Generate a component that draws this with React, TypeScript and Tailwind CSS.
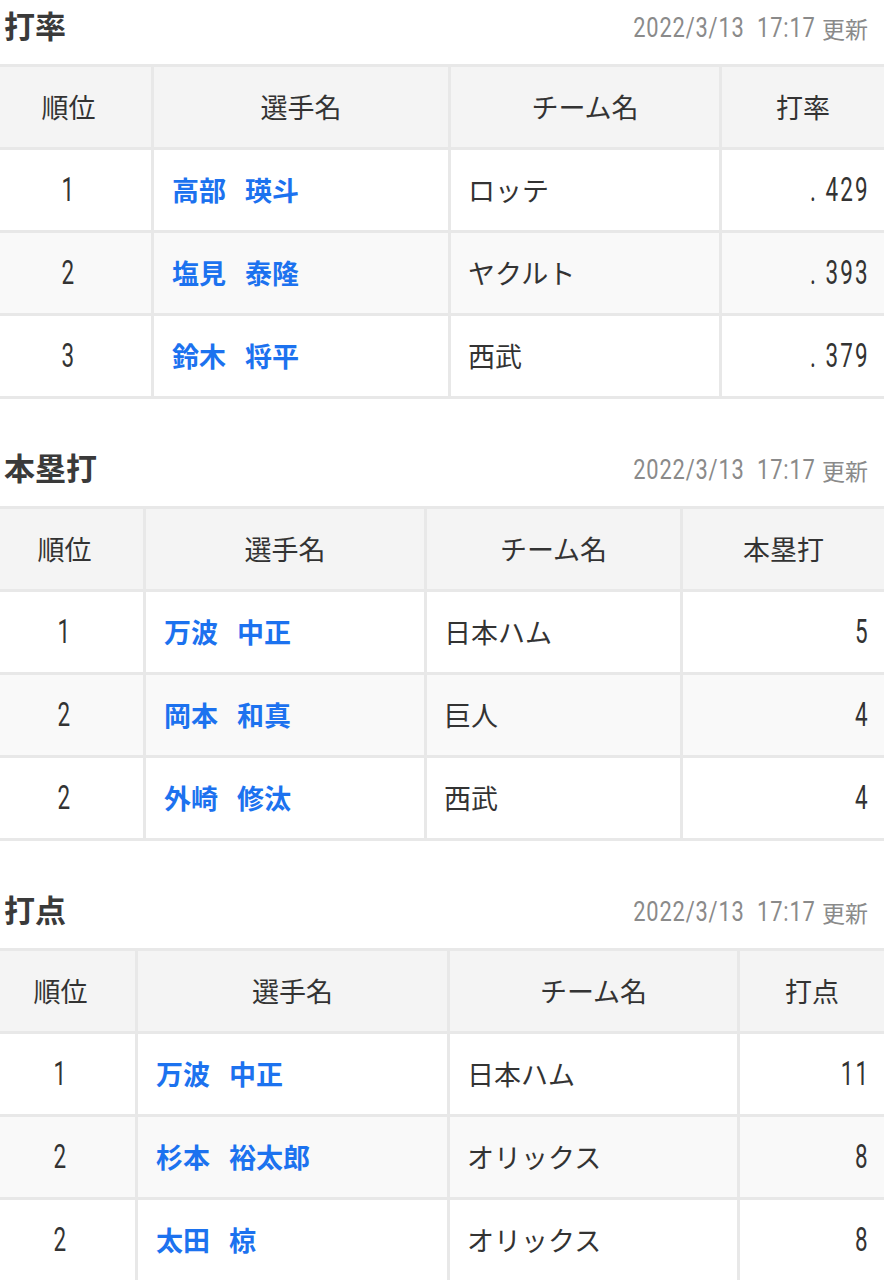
const ja = { fontFamily: '"Noto Sans CJK JP", "Noto Sans", sans-serif' };

type Row = { rank: string; first: string; last: string; team: string; value: string };

type Section = {
  title: string;
  cols: string;
  rows: Row[];
};

const sections: Section[] = [
  {
    title: "打率",
    cols: "grid-cols-[151px_297px_271px_1fr]",
    rows: [
      { rank: "1", first: "高部", last: "瑛斗", team: "ロッテ", value: ". 429" },
      { rank: "2", first: "塩見", last: "泰隆", team: "ヤクルト", value: ". 393" },
      { rank: "3", first: "鈴木", last: "将平", team: "西武", value: ". 379" },
    ],
  },
  {
    title: "本塁打",
    cols: "grid-cols-[143px_281px_256px_1fr]",
    rows: [
      { rank: "1", first: "万波", last: "中正", team: "日本ハム", value: "5" },
      { rank: "2", first: "岡本", last: "和真", team: "巨人", value: "4" },
      { rank: "2", first: "外崎", last: "修汰", team: "西武", value: "4" },
    ],
  },
  {
    title: "打点",
    cols: "grid-cols-[135px_312px_290px_1fr]",
    rows: [
      { rank: "1", first: "万波", last: "中正", team: "日本ハム", value: "11" },
      { rank: "2", first: "杉本", last: "裕太郎", team: "オリックス", value: "8" },
      { rank: "2", first: "太田", last: "椋", team: "オリックス", value: "8" },
    ],
  },
];

// condensed digits, roughly like the narrow numeral face in the screenshot
const Num = ({ children, origin }: { children: string; origin: string }) => (
  <span
    className={`inline-block scale-x-[0.68] tracking-[3px] whitespace-pre ${origin}`}
    style={{ fontFamily: 'Roboto, "Noto Sans", sans-serif' }}
  >
    {children}
  </span>
);

const RankingTable = ({ section }: { section: Section }) => (
  <section className="mb-[43px]">
    <div className="flex h-[50px] items-center justify-between pl-1 pr-4 mb-[14px]">
      <h2 className="text-[31px] font-bold text-[#3a3a3a]">{section.title}</h2>
      <div className="flex items-center mt-[6px] text-[23px] text-[#8a8a8a]">
        <span
          className="inline-block scale-x-[0.81] origin-right text-[27px] tracking-[1px] whitespace-pre"
          style={{ fontFamily: 'Roboto, sans-serif' }}
        >
          {"2022/3/13  17:17 "}
        </span>
        <span>更新</span>
      </div>
    </div>

    <div className="border-t-[3px] border-[#e8e8e8] text-[27px] text-[#333]">
      <div className={`grid ${section.cols} h-[83px] bg-[#f4f4f4] border-b-[3px] border-[#e8e8e8]`}>
        <div className="flex items-center justify-center pr-[14px]">順位</div>
        <div className="flex items-center justify-center border-l-[3px] border-[#e8e8e8]">選手名</div>
        <div className="flex items-center justify-center border-l-[3px] border-[#e8e8e8]">チーム名</div>
        <div className="flex items-center justify-center border-l-[3px] border-[#e8e8e8]">{section.title}</div>
      </div>
      {section.rows.map((r, i) => (
        <div
          key={i}
          className={`grid ${section.cols} h-[83px] border-b-[3px] border-[#e8e8e8] ${i % 2 === 1 ? "bg-[#f9f9f9]" : "bg-white"}`}
        >
          <div className="flex items-center justify-center pr-[14px] text-[33px]">
            <Num origin="origin-center">{r.rank}</Num>
          </div>
          <div className="flex items-center gap-[19px] pl-[18px] border-l-[3px] border-[#e8e8e8] font-bold text-[#1c72ef]">
            <span>{r.first}</span>
            <span>{r.last}</span>
          </div>
          <div className="flex items-center pl-[17px] border-l-[3px] border-[#e8e8e8]">{r.team}</div>
          <div className="flex items-center justify-end pr-[14px] border-l-[3px] border-[#e8e8e8] text-[33px]">
            <Num origin="origin-right">{r.value}</Num>
          </div>
        </div>
      ))}
    </div>
  </section>
);

export default function App() {
  return (
    <div className="w-[884px] bg-white" style={ja}>
      {sections.map((s) => (
        <RankingTable key={s.title} section={s} />
      ))}
    </div>
  );
}
